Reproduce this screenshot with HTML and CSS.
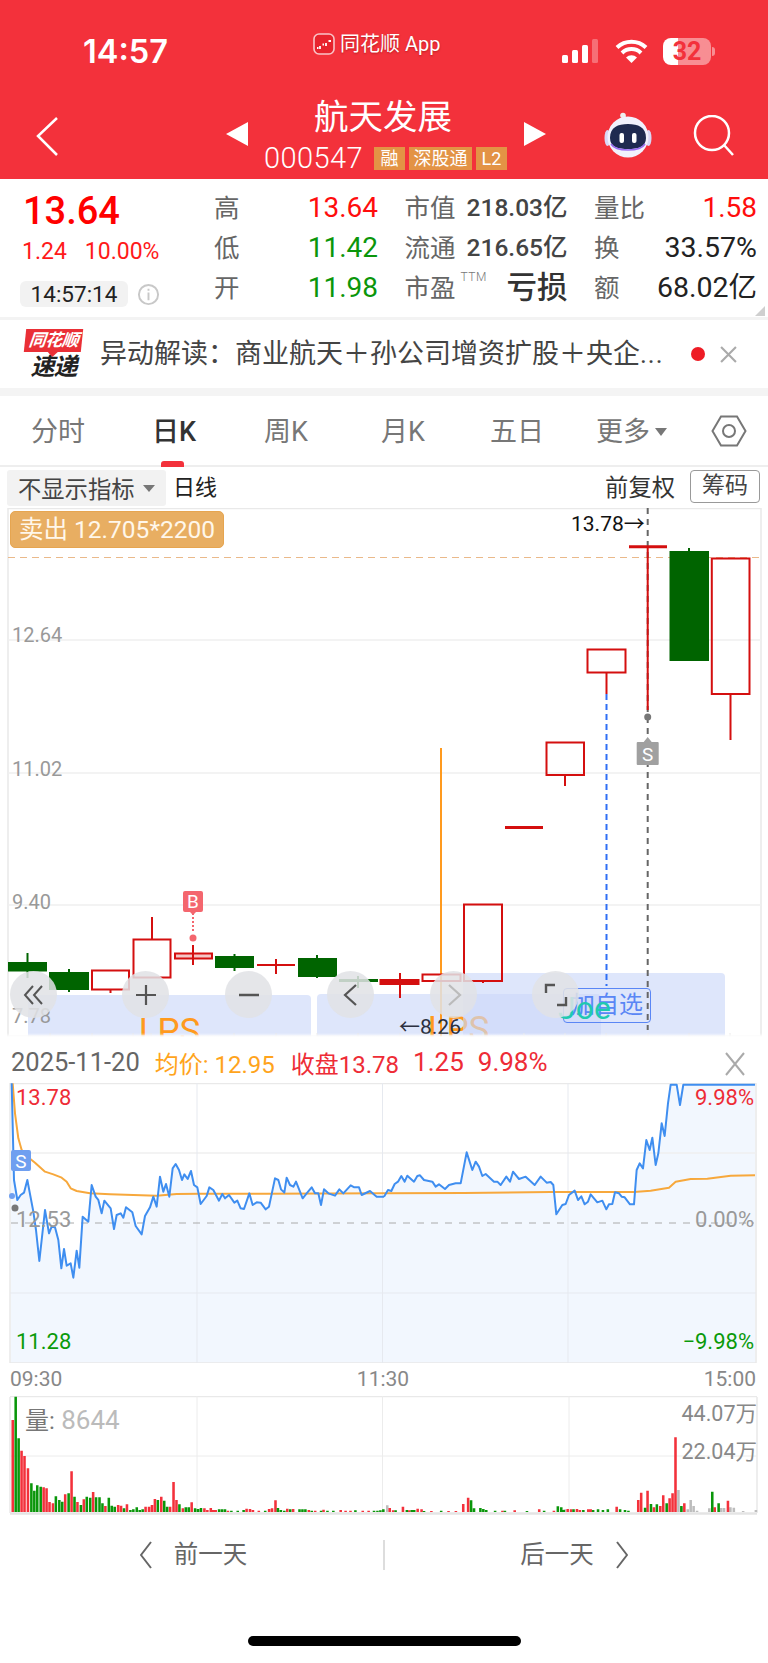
FILE: index.html
```html
<!DOCTYPE html>
<html lang="zh-CN">
<head>
<meta charset="utf-8">
<title>航天发展</title>
<link rel="stylesheet" href="styles.css">
</head>
<body>
<div class="page">
  <header class="top">
    <div class="status">
      <div class="clock">14:57</div>
      <div class="app">
        <svg class="app-logo" viewBox="0 0 22 22"><rect x="1" y="1" width="20" height="20" rx="5" fill="#e8232d" stroke="#f9c4c7" stroke-width="1.6"/><path d="M4 15h1.500M7 13v3M9.500 11.500h1.500M13 10v3M15.500 8h2.500" stroke="#fff" stroke-width="1.800"/></svg>
        <span>同花顺 App</span>
      </div>
      <div class="sys">
        <svg class="signal" viewBox="0 0 38 24"><rect x="0" y="16" width="6" height="8" rx="1.5" fill="#fff"/><rect x="10" y="11" width="6" height="13" rx="1.5" fill="#fff"/><rect x="20" y="6" width="6" height="18" rx="1.5" fill="#fff"/><rect x="30" y="0" width="6" height="24" rx="1.5" fill="#fff" opacity=".3"/></svg>
        <svg class="wifi" viewBox="0 0 33 24"><path d="M2 8.500a21 21 0 0 1 29 0M7 14a13.500 13.500 0 0 1 19 0" fill="none" stroke="#fff" stroke-width="4"/><path d="M11 18.500a8 8 0 0 1 11 0L16.500 24z" fill="#fff"/></svg>
        <div class="batt"><span>32</span></div>
        <i class="batt-tip"></i>
      </div>
    </div>
    <div class="navbar">
      <div class="nav-left">
        <svg class="back" viewBox="0 0 24 40"><path d="M22 2 3 20l19 19" fill="none" stroke="#fff" stroke-width="2.500"/></svg>
      </div>
      <div class="nav-mid">
        <svg class="tri" viewBox="0 0 22 24"><path d="M22 0v24L0 12z" fill="#fff"/></svg>
        <div class="stock">
          <div class="stock-name">航天发展</div>
          <div class="stock-sub">
            <span class="code">000547</span>
            <span class="tag tag-s">融</span><span class="tag">深股通</span><span class="tag tag-e">L2</span>
          </div>
        </div>
        <svg class="tri" viewBox="0 0 22 24"><path d="M0 0v24L22 12z" fill="#fff"/></svg>
      </div>
      <div class="nav-right">
        <svg class="robot" viewBox="0 0 48 46">
          <path d="M22 10c0-3 0-4-2-6" stroke="#e8e4f8" stroke-width="2" fill="none"/><circle cx="19" cy="3.500" r="2.800" fill="#eee"/>
          <ellipse cx="3.500" cy="26" rx="3" ry="8" fill="#d9d7f6"/><ellipse cx="44.500" cy="26" rx="3" ry="8" fill="#d9d7f6"/>
          <circle cx="24" cy="25" r="20.500" fill="#f1f1fd"/>
          <path d="M6 26C6 15 14 12 24 12s18 3 18 14c0 9-8 11-18 11S6 35 6 26z" fill="#1f2a50"/>
          <path d="M7 32c3 5 10 6 17 6s14-1 17-6" fill="none" stroke="#9a6cf0" stroke-width="1.500"/>
          <rect x="15.500" y="21" width="4.500" height="10" rx="2" fill="#fff"/><rect x="28" y="21" width="4.500" height="10" rx="2" fill="#fff"/>
        </svg>
        <svg class="search" viewBox="0 0 42 42"><circle cx="19" cy="18" r="17" fill="none" stroke="#fff" stroke-width="2.500"/><path d="m31 30 9 10" stroke="#fff" stroke-width="2.500"/></svg>
      </div>
    </div>
  </header>

  <section class="quote">
    <div class="q-main">
      <div class="q-price">13.64</div>
      <div class="q-change"><span>1.24</span><span>10.00%</span></div>
      <div class="q-time"><span class="pill">14:57:14</span>
        <svg class="info" viewBox="0 0 24 24"><circle cx="12" cy="12" r="10" fill="none" stroke="#c8c8c8" stroke-width="2"/><path d="M12 10v8M12 6v2" stroke="#c8c8c8" stroke-width="2"/></svg>
      </div>
    </div>
    <div class="q-grid">
      <div class="cell"><span class="lab">高</span><span class="val red">13.64</span></div>
      <div class="cell"><span class="lab">市值</span><span class="val2">218.03亿</span></div>
      <div class="cell"><span class="lab">量比</span><span class="val red">1.58</span></div>
      <div class="cell"><span class="lab">低</span><span class="val green">11.42</span></div>
      <div class="cell"><span class="lab">流通</span><span class="val2">216.65亿</span></div>
      <div class="cell"><span class="lab">换</span><span class="val dark">33.57%</span></div>
      <div class="cell"><span class="lab">开</span><span class="val green">11.98</span></div>
      <div class="cell"><span class="lab">市盈<sup class="ttm">TTM</sup></span><span class="loss">亏损</span></div>
      <div class="cell"><span class="lab">额</span><span class="val dark">68.02亿</span></div>
    </div>
    <i class="corner"></i>
  </section>

  <section class="ticker">
    <div class="tlogo">
      <div class="tlogo-red">同花顺</div>
      <div class="tlogo-txt">速递</div>
    </div>
    <div class="ticker-text">异动解读：商业航天＋孙公司增资扩股＋央企<span class="dots">...</span></div>
    <i class="ticker-dot"></i>
    <svg class="ticker-x" viewBox="0 0 16 16"><path d="m1 1 14 14M15 1 1 15" stroke="#aaa" stroke-width="2"/></svg>
  </section>

  <nav class="tabs">
    <span class="tab t1">分时</span>
    <span class="tab t2 on">日K</span>
    <span class="tab t3">周K</span>
    <span class="tab t4">月K</span>
    <span class="tab t5">五日</span>
    <span class="tab t6">更多<i class="caret"></i></span>
    <svg class="hex" viewBox="0 0 36 32"><path d="M1.500 16 10 1.500h16L34.500 16 26 30.500H10z" fill="none" stroke="#777" stroke-width="2"/><circle cx="18" cy="16" r="6" fill="none" stroke="#777" stroke-width="2"/></svg>
  </nav>

  <div class="toolbar">
    <div class="ind">不显示指标<i class="caret small"></i></div>
    <span class="period">日线</span>
    <span class="adjust">前复权</span>
    <span class="chip">筹码</span>
  </div>

  <section class="kchart">
    <div class="panel p1"><span class="lps">LPS</span></div>
    <div class="panel p2"><span class="lps">LPS</span></div>
    <div class="panel p3"></div>
    <svg class="kline" viewBox="0 508 768 529">
      <path d="M8 508V1037M761 508V1037M8 508.500H761" stroke="#e9e9e9" stroke-width="1.500" fill="none"/>
      <path d="M8 640H761M8 773H761M8 905H761" stroke="#efefef" stroke-width="1.500"/>
      <path d="M8 1036H761" stroke="#efefef" stroke-width="1"/>
      <text x="12" y="528" class="axis faint">14.26</text>
      <text x="12" y="642" class="axis">12.64</text>
      <text x="12" y="776" class="axis">11.02</text>
      <text x="12" y="909" class="axis">9.40</text>
      <text x="12" y="1023" class="axis">7.78</text>
      <path d="M8 557.500H761" stroke="#eab98a" stroke-width="1" stroke-dasharray="7 5"/>
      <path d="M441 748V1037" stroke="#ff9a1e" stroke-width="2"/>
      <path d="M606.500 694V986" stroke="#2f6ff5" stroke-width="2" stroke-dasharray="6 4"/>
      <path d="M647.700 508V1030" stroke="#666" stroke-width="2" stroke-dasharray="6 5"/>
      <text x="571" y="531" class="mark">13.78<tspan class="arrow">→</tspan></text>
      <g class="cg">
        <rect x="8" y="962" width="39" height="9.500"/><path d="M27.500 953V978"/>
        <rect x="49" y="972" width="40" height="18"/><path d="M69 969V992"/>
        <rect x="215" y="956" width="39" height="12"/><path d="M234.500 954V971"/>
        <rect x="298" y="958" width="39" height="19"/><path d="M317 955V978"/>
        <rect x="339" y="979" width="39" height="3"/><path d="M358 976V988"/>
        <rect x="669.500" y="551" width="39.500" height="110"/><path d="M689 548V551"/>
      </g>
      <g class="cr">
        <rect x="92" y="970.500" width="37" height="19"/><path d="M110.500 990V993"/>
        <rect x="133.500" y="939.500" width="37" height="38"/><path d="M152 917V939"/>
        <rect x="175" y="953.500" width="37" height="5" class="pink"/><path d="M193 945V965"/>
        <path d="M257 965H295M276 959V974"/>
        <rect x="380.500" y="980" width="38" height="4" class="solid"/><path d="M400 973V998"/>
        <rect x="422.500" y="974.500" width="38" height="6.500"/>
        <rect x="464" y="904.500" width="38" height="76.500"/><path d="M483 981V983"/>
        <path d="M505 827.500H543" class="thick"/>
        <rect x="546.500" y="742.500" width="37.500" height="32.500"/><path d="M565 775V786"/>
        <rect x="587.500" y="649.500" width="38" height="23"/><path d="M606.500 672V694"/>
        <path d="M629 546.700H667" class="thick"/><path d="M647.700 547V710"/>
        <rect x="711.800" y="558.500" width="37.700" height="135.500"/><path d="M730.500 694V740"/>
      </g>
      <circle cx="647.700" cy="717" r="3.500" fill="#777"/>
      <path d="M647.700 737l4 5h6a1 1 0 0 1 1 1v21a1 1 0 0 1-1 1h-20a1 1 0 0 1-1-1v-21a1 1 0 0 1 1-1h6z" fill="#a0a0a0"/>
      <text x="647.700" y="761" class="badge-s" text-anchor="middle">S</text>
      <path d="M193 913V932" stroke="#f4666e" stroke-width="2" stroke-dasharray="2 2"/>
      <circle cx="193" cy="938" r="3.500" fill="#f4666e"/>
      <path d="M185 891h16a2 2 0 0 1 2 2v17a2 2 0 0 1-2 2h-5l-3 3-3-3h-5a2 2 0 0 1-2-2v-17a2 2 0 0 1 2-2z" fill="#f4666e"/>
      <text x="193" y="908" class="badge-s" text-anchor="middle">B</text>
      <path d="M50 1033v4M92 1033v4M133 1033v4M151 1033v4M192 1033v4M234 1033v4M276 1033v4M317 1033v4M358 1033v4M400 1033v4M441 1033v4M483 1033v4M524 1033v4M565 1033v4M606 1033v4M648 1033v4M689 1033v4M730 1033v4" stroke="#e6e6e6" stroke-width="1"/>
    </svg>
    <div class="sell">卖出 12.705*2200</div>
    <div class="arrow-left"><span class="arrow">←</span>8.26</div>
    <div class="follow"><span>加自选</span></div>
    <div class="joe">Joe</div>
    <button class="ctl c1"><svg viewBox="0 0 24 24"><path d="M11 3 3 12l8 9M20 3l-8 9 8 9" fill="none" stroke="#555" stroke-width="2"/></svg></button>
    <button class="ctl c2"><svg viewBox="0 0 24 24"><path d="M12 2v20M2 12h20" stroke="#555" stroke-width="2.200"/></svg></button>
    <button class="ctl c3"><svg viewBox="0 0 24 24"><path d="M2 12h20" stroke="#555" stroke-width="2.500"/></svg></button>
    <button class="ctl c4"><svg viewBox="0 0 24 24"><path d="M17 2 6 12l11 10" fill="none" stroke="#555" stroke-width="2.200"/></svg></button>
    <button class="ctl c5"><svg viewBox="0 0 24 24"><path d="m7 2 11 10L7 22" fill="none" stroke="#bbb" stroke-width="2.200"/></svg></button>
    <button class="ctl c6"><svg viewBox="0 0 24 24"><path d="M2 10V2h9M22 14v8h-9" fill="none" stroke="#555" stroke-width="2.400"/></svg></button>
    <div class="fade"></div>
  </section>

  <div class="detail">
    <span class="d-date">2025-11-20</span>
    <span class="d-avg">均价: 12.95</span>
    <span class="d-close">收盘13.78</span>
    <span class="d-close wide">1.25</span>
    <span class="d-close wide">9.98%</span>
    <svg class="d-x" viewBox="0 0 20 24"><path d="m1 1 18 22M19 1 1 23" stroke="#aaa" stroke-width="2"/></svg>
  </div>

  <section class="intraday">
    <svg class="ichart" viewBox="0 1083 768 280">
      <g transform="translate(0 1080) scale(.33333)">
        <polygon class="area" points="33,850 33,10 35,10 42,300 52,360 62,345 72,338 82,300 100,395 108,450 118,543 135,390 147,460 155,440 165,442 175,480 184,565 192,507 200,557 212,550 220,593 230,512 238,563 248,410 265,425 275,315 287,350 295,360 305,400 313,362 332,385 342,447 350,405 362,400 370,413 378,382 397,397 407,438 425,463 435,408 450,382 460,350 470,380 480,290 490,335 498,312 508,350 518,265 527,252 537,270 546,300 553,283 563,297 573,273 582,315 592,322 602,372 620,348 628,322 640,330 657,362 667,342 675,355 687,345 703,368 712,362 722,385 732,387 748,340 758,375 770,367 782,368 797,388 807,380 825,295 835,300 843,328 853,338 860,293 870,315 880,320 888,305 908,355 920,340 935,322 945,340 955,340 963,375 972,328 985,340 1005,347 1018,328 1030,340 1052,316 1063,322 1077,322 1085,345 1110,333 1130,350 1153,350 1153,850"/>
        <polygon class="area" transform="translate(1152 0)" points="0,850 0,350 12,330 22,333 32,312 42,305 52,288 62,305 70,287 90,305 100,288 108,286 120,300 145,305 155,320 165,313 183,327 195,315 215,310 230,310 248,217 265,270 275,245 285,260 295,288 305,282 330,305 340,305 350,315 367,290 378,305 387,275 405,297 425,290 452,315 470,290 488,308 500,306 508,315 517,403 535,375 545,372 555,345 572,332 582,360 592,349 602,373 612,365 620,343 640,367 655,362 667,388 675,373 685,372 693,337 705,340 713,350 722,352 738,373 750,373 758,270 767,250 777,265 787,180 797,210 805,173 815,255 823,220 833,130 842,168 852,70 860,14 878,14 888,75 898,14 1113,14 1113,850"/>
      </g>
      <path d="M10 1083.500H756V1363H10Z" fill="none" stroke="#e9e9e9" stroke-width="1.500"/>
      <path d="M10 1153H756" stroke="#efefef" stroke-width="1.500"/>
      <path d="M10 1293H756M197 1083V1363M382.500 1083V1363M568 1083V1363" stroke="#e6e9ef" stroke-width="1"/>
      <path d="M11 1223H754" stroke="#aaa" stroke-width="1" stroke-dasharray="7 7"/>
      <g transform="translate(0 1080) scale(.33333)" fill="none" stroke-linejoin="round">
        <polyline class="avg" points="38,10 45,100 55,175 65,210 80,228 105,248 135,275 160,283 185,293 200,305 212,325 230,333 270,340 330,343 400,345 470,347 530,342 600,341 800,341 1152,340 1392,339 1652,336 1902,336 1952,332 2007,323 2027,305 2072,297 2122,296 2192,287 2265,286"/>
        <polyline class="px" points="35,10 42,300 52,360 62,345 72,338 82,300 100,395 108,450 118,543 135,390 147,460 155,440 165,442 175,480 184,565 192,507 200,557 212,550 220,593 230,512 238,563 248,410 265,425 275,315 287,350 295,360 305,400 313,362 332,385 342,447 350,405 362,400 370,413 378,382 397,397 407,438 425,463 435,408 450,382 460,350 470,380 480,290 490,335 498,312 508,350 518,265 527,252 537,270 546,300 553,283 563,297 573,273 582,315 592,322 602,372 620,348 628,322 640,330 657,362 667,342 675,355 687,345 703,368 712,362 722,385 732,387 748,340 758,375 770,367 782,368 797,388 807,380 825,295 835,300 843,328 853,338 860,293 870,315 880,320 888,305 908,355 920,340 935,322 945,340 955,340 963,375 972,328 985,340 1005,347 1018,328 1030,340 1052,316 1063,322 1077,322 1085,345 1110,333 1130,350 1152,350"/>
        <polyline class="px" transform="translate(1152 0)" points="0,350 12,330 22,333 32,312 42,305 52,288 62,305 70,287 90,305 100,288 108,286 120,300 145,305 155,320 165,313 183,327 195,315 215,310 230,310 248,217 265,270 275,245 285,260 295,288 305,282 330,305 340,305 350,315 367,290 378,305 387,275 405,297 425,290 452,315 470,290 488,308 500,306 508,315 517,403 535,375 545,372 555,345 572,332 582,360 592,349 602,373 612,365 620,343 640,367 655,362 667,388 675,373 685,372 693,337 705,340 713,350 722,352 738,373 750,373 758,270 767,250 777,265 787,180 797,210 805,173 815,255 823,220 833,130 842,168 852,70 860,14 878,14 888,75 898,14 1113,14"/>
      </g>
      <text x="16" y="1105" class="ilab lred">13.78</text>
      <text x="754" y="1105" class="ilab lred" text-anchor="end">9.98%</text>
      <text x="16" y="1227" class="ilab lgray">12.53</text>
      <text x="754" y="1227" class="ilab lgray" text-anchor="end">0.00%</text>
      <text x="16" y="1349" class="ilab lgreen">11.28</text>
      <text x="754" y="1349" class="ilab lgreen" text-anchor="end">−9.98%</text>
      <circle cx="12" cy="1196" r="3" fill="#6f9ff0"/>
      <circle cx="15" cy="1208" r="3.500" fill="#777"/>
      <rect x="11" y="1150" width="20" height="21" rx="2" fill="#6f9ff0"/>
      <text x="21" y="1168" class="badge-s" text-anchor="middle">S</text>
    </svg>
  </section>

  <div class="times"><span>09:30</span><span>11:30</span><span>15:00</span></div>

  <section class="volume">
    <svg class="vchart" viewBox="0 1396 768 119">
      <path d="M10 1396.500H757M10 1397V1513M757 1397V1513" stroke="#e9e9e9" stroke-width="1.500" fill="none"/>
      <path d="M10 1456H757M197 1396V1512M382.500 1396V1512M569 1396V1512" stroke="#ececec" stroke-width="1"/>
      <path d="M10 1513.500H757" stroke="#e4e4e4" stroke-width="2.500"/>
      <g transform="translate(0 1380) scale(.4902 .33333)" stroke-width="5.200" fill="none">
        <path stroke="#bdbdbd" d="M790 396V376M1152 396V388M1384 396V330M1390 396V382M1403 396V388M1409 396V360M1415 396V378M1422 396V392M1447 396V385M1471 396V384M1477 396V384M1490 396V382M1497 396V383M1516 396V393M1542 396V390"/>
        <path stroke="#f3313b" d="M26 396V120M44 396V212M50 396V228M57 396V265M89 396V322M95 396V325M101 396V366M108 396V370M133 396V343M146 396V274M158 396V366M171 396V358M190 396V336M215 396V378M241 396V375M247 396V377M259 396V373M297 396V380M304 396V380M310 396V375M316 396V357M329 396V350M347 396V380M354 396V306M360 396V360M373 396V385M391 396V367M417 396V385M423 396V390M430 396V384M435 396V390M440 396V390M465 396V392M503 396V386M510 396V387M516 396V390M528 396V392M549 396V387M555 396V385M562 396V361M586 396V386M598 396V387M630 396V390M643 396V392M660 396V389M695 396V390M705 396V392M715 396V392M740 396V392M752 396V392M795 396V384M802 396V391M822 396V380M835 396V391M852 396V386M860 396V388M880 396V393M915 396V393M930 396V393M945 396V372M955 396V353M1025 396V392M1050 396V391M1100 396V388M1130 396V392M1158 396V387M1165 396V388M1177 396V387M1183 396V390M1200 396V388M1205 396V388M1258 396V380M1302 396V360M1308 396V338M1321 396V332M1334 396V382M1347 396V378M1353 396V346M1366 396V355M1372 396V340M1378 396V172M1396 396V370M1458 396V382M1485 396V362"/>
        <path stroke="#0a960a" d="M32 396V50M38 396V175M64 396V310M70 396V332M76 396V316M83 396V320M114 396V349M121 396V360M127 396V365M140 396V340M152 396V350M165 396V375M177 396V350M184 396V353M196 396V352M203 396V352M209 396V370M222 396V353M228 396V377M234 396V380M253 396V385M266 396V390M272 396V388M279 396V382M285 396V390M291 396V388M322 396V360M335 396V362M341 396V380M366 396V373M379 396V382M385 396V382M398 396V385M404 396V387M410 396V384M447 396V388M453 396V388M459 396V388M472 396V392M485 396V392M497 396V390M541 396V392M567 396V384M573 396V390M580 396V392M592 396V388M611 396V388M617 396V388M623 396V388M636 396V392M655 396V392M668 396V392M680 396V392M725 396V391M763 396V392M770 396V392M776 396V391M782 396V388M807 396V391M830 396V390M840 396V390M845 396V390M865 396V393M900 396V392M961 396V361M967 396V385M980 396V384M986 396V387M992 396V390M1010 396V392M1030 396V392M1075 396V393M1110 396V392M1138 396V379M1145 396V382M1150 396V390M1170 396V388M1190 396V390M1210 396V390M1220 396V388M1230 396V390M1240 396V388M1265 396V388M1275 396V390M1282 396V392M1316 396V383M1328 396V372M1340 396V373M1360 396V370M1390 396V378M1453 396V335M1466 396V370"/>
      </g>
      <text x="25" y="1429" class="vlab"><tspan class="vq">量:</tspan> 8644</text>
      <text x="757" y="1421" class="vmax" text-anchor="end">44.07万</text>
      <text x="757" y="1459" class="vmax" text-anchor="end">22.04万</text>
    </svg>
  </section>

  <footer class="bottom">
    <div class="day left">
      <svg class="chev" viewBox="0 0 12 28"><path d="M11 1 1 14l10 13" fill="none" stroke="#666" stroke-width="2"/></svg>
      <span>前一天</span>
    </div>
    <i class="divider"></i>
    <div class="day right">
      <span>后一天</span>
      <svg class="chev" viewBox="0 0 12 28"><path d="m1 1 10 13L1 27" fill="none" stroke="#666" stroke-width="2"/></svg>
    </div>
  </footer>
  <div class="home"></div>
</div>
</body>
</html>
```
FILE: styles.css
```css
* { box-sizing: border-box; }
html, body { margin: 0; padding: 0; background: #fff; }
body { font-family: Roboto, "Noto Sans CJK SC", sans-serif; color: #222; }
.page { width: 768px; height: 1663px; overflow: hidden; background: #fff; }
i { display: block; font-style: normal; }

/* header */
.top { height: 179px; background: #f3313b; color: #fff; }
.status { height: 96px; display: grid; grid-template-columns: 230px 249px auto; padding: 4px 0 0 83px; align-items: center; }
.clock { font-family: Inter, sans-serif; font-weight: 600; font-size: 32.500px; line-height: 36px; margin-top: 4px; }
.app { display: flex; align-items: center; gap: 5px; margin-top: -12px; font-size: 20px; line-height: 26px; text-shadow: 0 1px 2px rgba(120, 0, 0, .45); white-space: nowrap; }
.app-logo { width: 22px; height: 22px; }
.sys { display: flex; align-items: center; margin-top: 2px; }
.signal { width: 38px; height: 24px; }
.wifi { width: 33px; height: 24px; margin-left: 15px; }
.batt { width: 48px; height: 27px; margin-left: 15px; border-radius: 8px; background: linear-gradient(90deg, #fff 31%, rgba(255, 255, 255, .45) 31%); text-align: center; }
.batt span { display: block; font-weight: 700; font-size: 25px; line-height: 27px; color: #f3313b; }
.batt-tip { width: 3px; height: 9px; margin-left: 1px; background: rgba(255, 255, 255, .45); border-radius: 0 3px 3px 0; }

.navbar { height: 83px; display: grid; grid-template-columns: 226px 320px 222px; }
.nav-left { padding: 20px 0 0 35px; }
.back { width: 24px; height: 40px; display: block; }
.nav-mid { display: flex; justify-content: space-between; align-items: flex-start; }
.tri { width: 22px; height: 24px; margin-top: 26px; }
.stock { width: 244px; text-align: center; }
.stock-name { font-size: 34.500px; line-height: 42px; margin-right: 6px; }
.stock-sub { margin-top: 9px; height: 23px; display: flex; align-items: center; white-space: nowrap; }
.code { flex: none; font-size: 29px; font-weight: 300; line-height: 23px; letter-spacing: .4px; width: 104px; text-align: left; }
.tag { flex: none; background: #e39345; color: #fff; height: 23px; line-height: 23px; font-size: 18px; width: 63px; text-align: center; margin-left: 4px; }
.tag-s { margin-left: 6px; width: 31px; }
.tag-e { width: 31px; }
.nav-right { position: relative; display: flex; align-items: flex-start; padding: 16px 0 0 58px; }
.robot { width: 48px; height: 46px; }
.search { width: 42px; height: 42px; margin: 3px 0 0 41px; }

/* quote */
.quote { position: relative; height: 141px; border-bottom: 3px solid #f3f3f3; display: flex; }
.q-main { width: 214px; padding: 12px 0 0 23px; }
.q-price { color: #ff0000; font-size: 38px; font-weight: 500; line-height: 40px; }
.q-change { display: flex; gap: 18px; margin: 8px 0 0 -1px; color: #ff1a1a; font-size: 23px; line-height: 26px; }
.q-time { display: flex; align-items: center; gap: 9px; margin: 16px 0 0 -3px; }
.pill { background: #f2f2f2; border-radius: 6px; width: 108px; height: 26px; line-height: 26px; text-align: center; font-size: 22.500px; color: #222; }
.info { width: 23px; height: 23px; }
.q-grid { width: 543px; display: grid; grid-template-columns: 164px 163px 163px; column-gap: 26.500px; grid-template-rows: repeat(3, 40px); padding-top: 9px; align-content: start; }
.cell { display: flex; justify-content: space-between; align-items: center; white-space: nowrap; }
.lab { font-size: 25.500px; color: #666; line-height: 40px; position: relative; }
.val { font-size: 28px; line-height: 40px; }
.val.dark { color: #222; font-size: 28.500px; }
.red { color: #ff0d0d; }
.green { color: #0b960b; }
.val2 { font-size: 24.500px; line-height: 40px; color: #444; font-weight: 500; }
.loss { font-size: 30.500px; line-height: 40px; color: #333; font-weight: 500; }
.ttm { position: absolute; left: 56px; top: 3px; font-size: 12px; line-height: 12px; color: #777; letter-spacing: .5px; font-weight: 300; }
.corner { position: absolute; right: 3px; bottom: 1px; width: 0; height: 0; border-left: 10px solid transparent; border-bottom: 10px solid #cfcfcf; }

/* ticker */
.ticker { height: 76px; padding: 0 0 0 25px; border-bottom: 8px solid #f4f4f4; display: flex; align-items: center; }
.tlogo { width: 57px; }
.tlogo-red { position: relative; background: #ea2f36; color: #fff; font-size: 17px; font-style: italic; font-weight: 700; line-height: 23px; height: 23px; text-align: center; white-space: nowrap; transform: skewX(-6deg); letter-spacing: -.5px; }
.tlogo-red::after { content: ""; position: absolute; left: 24px; bottom: -5px; border: 5px solid transparent; border-bottom: 0; border-top-color: #ea2f36; }
.tlogo-txt { margin-top: 2px; font-size: 24px; font-style: italic; font-weight: 700; line-height: 26px; text-align: center; color: #222; letter-spacing: -1px; }
.ticker-text { margin-left: 18px; width: 566px; font-size: 27px; line-height: 40px; color: #444; white-space: nowrap; }
.dots { letter-spacing: 1px; font-size: 26px; }
.ticker-dot { width: 14px; height: 14px; border-radius: 50%; background: #ee1c25; margin-left: 25px; }
.ticker-x { width: 17px; height: 17px; margin-left: 15px; }

/* tabs */
.tabs { position: relative; height: 71px; border-bottom: 2px solid #eeeeee; display: grid; grid-template-columns: 31px 121px 112px 117px 109px 106px 116px 56px; align-items: center; color: #777; font-size: 27px; }
.tab { line-height: 40px; padding-top: 3px; white-space: nowrap; display: flex; align-items: center; }
.t1 { grid-column: 2; }
.t2 { grid-column: 3; }
.t3 { grid-column: 4; }
.t4 { grid-column: 5; }
.t5 { grid-column: 6; }
.t6 { grid-column: 7; }
.hex { grid-column: 8; width: 36px; height: 32px; margin-left: -1px; }
.on { color: #333; font-weight: 500; position: relative; }
.on::after { content: ""; position: absolute; left: 9px; bottom: -15px; width: 23px; height: 6px; border-radius: 3px 3px 0 0; background: #f3313b; }
.caret { width: 0; height: 0; border: 6px solid transparent; border-bottom: 0; border-top: 8px solid #777; margin-left: 5px; }
.caret.small { border-width: 7px 6px 0; border-top-color: #777; margin-left: 9px; }

/* toolbar */
.toolbar { height: 41px; padding: 3px 7px 2px 7px; display: flex; align-items: flex-start; color: #222; }
.ind { width: 159px; height: 36px; background: #f2f2f2; border-radius: 3px; padding-left: 11px; display: flex; align-items: center; font-size: 23.300px; color: #444; white-space: nowrap; }
.period { margin-left: 7px; font-size: 22px; line-height: 36px; }
.adjust { margin-left: auto; font-size: 23.300px; line-height: 36px; color: #333; }
.chip { margin: 0 1px 0 15px; width: 70px; height: 33px; border: 1.500px solid #999; border-radius: 4px; text-align: center; font-size: 23px; line-height: 30px; color: #444; }

/* k chart */
.kchart { position: relative; height: 529px; overflow: hidden; }
.kline { display: block; width: 768px; height: 529px; position: relative; }
.panel { position: absolute; background: rgba(205, 217, 249, .65); border-radius: 4px 4px 0 0; height: 70px; text-align: center; overflow: hidden; }
.p1 { left: 28px; top: 487px; width: 283px; }
.p2 { left: 317px; top: 486px; width: 284px; }
.p3 { left: 463px; top: 465px; width: 262px; }
.lps { display: block; margin-top: 19px; font-size: 35px; line-height: 36px; color: #ff9a1e; }
.p2 .lps { margin: 18px 0 0 -1px; }
.axis { font-family: Roboto, sans-serif; font-size: 20px; fill: #999; }
.axis.faint { fill: #bbb; }
.mark { font-family: Roboto, sans-serif; font-size: 21px; fill: #111; }
.arrow { font-family: "Noto Sans CJK SC", sans-serif; }
.badge-s { font-family: Roboto, sans-serif; font-size: 19px; fill: #fff; }
.cg rect { fill: #006400; }
.cg path { stroke: #006400; stroke-width: 2; }
.cr rect { fill: none; stroke: #d40f0f; stroke-width: 2; }
.cr rect.pink { fill: #f4c6c6; }
.cr rect.solid { fill: #d40f0f; }
.cr path { stroke: #d40f0f; stroke-width: 2; fill: none; }
.cr path.thick { stroke-width: 3; }
.sell { position: absolute; left: 10px; top: 3px; width: 214px; height: 37px; background: #e8ae62; border: 1px solid #e6a550; border-radius: 5px; color: #fff7ea; font-size: 24.500px; line-height: 35px; padding-left: 8px; white-space: nowrap; }
.arrow-left { position: absolute; left: 399px; top: 505px; font-size: 21px; line-height: 24px; color: #2b3040; white-space: nowrap; }
.follow { position: absolute; left: 563px; top: 480px; width: 88px; height: 35px; border: 1.500px solid #5a86f5; border-radius: 4px; color: #5a86f5; font-size: 24px; line-height: 32px; text-align: center; }
.joe { position: absolute; left: 558px; top: 482px; font-size: 32px; line-height: 36px; color: #1fc9b0; }
.ctl { position: absolute; top: 463px; width: 47px; height: 47px; padding: 0; border: 0; border-radius: 50%; background: rgba(225, 226, 229, .86); display: flex; align-items: center; justify-content: center; }
.ctl svg { width: 24px; height: 24px; }
.c1 { left: 10px; }
.c2 { left: 122px; }
.c3 { left: 225px; }
.c4 { left: 327px; }
.c5 { left: 430px; }
.c6 { left: 532px; }
.fade { position: absolute; left: 0; right: 0; bottom: 0; height: 4px; background: linear-gradient(rgba(255, 255, 255, 0), #fff); }

/* detail */
.detail { height: 46px; display: flex; align-items: center; padding: 4px 0 0 11px; font-size: 24px; white-space: nowrap; position: relative; }
.d-date { color: #666; font-size: 25.500px; margin-right: 15px; }
.d-avg { color: #ffa41c; margin-right: 16px; }
.d-close { color: #ee2c36; margin-right: 14px; }
.d-close.wide { font-size: 26px; }
.d-x { position: absolute; left: 725px; top: 15px; width: 20px; height: 24px; }

/* intraday */
.intraday { height: 280px; }
.ichart { display: block; width: 768px; height: 280px; }
.area { fill: #f2f7fe; }
.px { stroke: #3f8ef0; stroke-width: 6; }
.avg { stroke: #f7a83c; stroke-width: 6; }
.ilab { font-family: Roboto, sans-serif; font-size: 22px; }
.lred { fill: #ee2c36; }
.lgray { fill: #999; }
.lgreen { fill: #0a9a0a; }
.times { height: 33px; padding: 4px 12px 0 10px; display: flex; justify-content: space-between; font-size: 21px; line-height: 25px; color: #888; }

/* volume */
.volume { height: 119px; }
.vchart { display: block; width: 768px; height: 119px; }
.vlab { font-family: Roboto, "Noto Sans CJK SC", sans-serif; font-size: 26px; fill: #bbb; }
.vq { fill: #777; font-size: 24px; }
.vmax { font-family: Roboto, "Noto Sans CJK SC", sans-serif; font-size: 21.500px; fill: #888; }

/* bottom */
.bottom { height: 121px; display: grid; grid-template-columns: 383px 2px 383px; align-items: start; padding-top: 25px; color: #666; }
.day { height: 30px; display: flex; align-items: center; justify-content: center; gap: 22px; font-size: 24.500px; line-height: 30px; }
.day.left { padding-left: 4px; }
.day.right { padding-right: 5px; }
.chev { width: 12px; height: 28px; }
.divider { width: 2px; height: 30px; background: #ddd; }
.home { width: 273px; height: 10px; margin-left: 248px; background: #000; border-radius: 5px; }
```
